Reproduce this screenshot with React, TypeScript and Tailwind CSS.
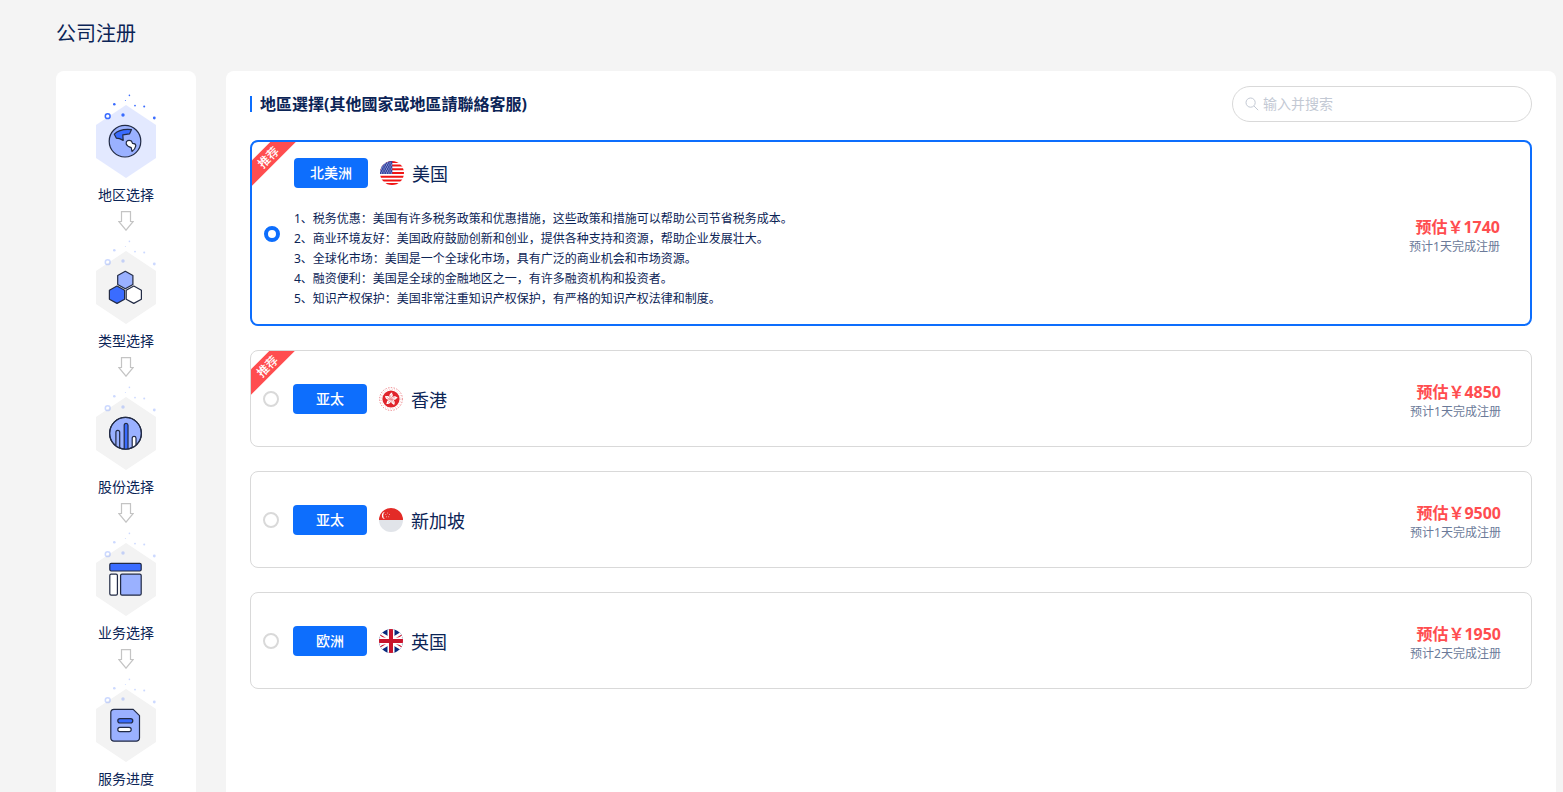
import { useState } from "react";
import type { ReactNode } from "react";
import clsx from "clsx";

const INK = "#222b45";

function GlobeIcon() {
  return (
    <g stroke={INK} strokeWidth="1.2" strokeLinejoin="round">
      <circle cx="29" cy="50.2" r="15.8" fill="#9ab1ff" />
      <path
        d="M18.3 43.2Q24 37.4 35.5 38.6L33.6 42.8 26.8 43.8 27.2 49.4 23.6 47.6 20.4 47.2Z"
        fill="#3a6cff"
      />
      <path
        d="M30.4 50.6Q32.6 48.6 35.4 50L36.6 52.4Q39.8 52.6 39.8 54.8 39.2 58.2 36 60.4L35.2 56.6Q31.2 55.4 30.2 53Z"
        fill="#fff"
      />
    </g>
  );
}

function TypeIcon() {
  const hex = "M0 -8.7L7.6 -4.5V4.5L0 8.7L-7.6 4.5V-4.5Z";
  return (
    <g stroke={INK} strokeWidth="1.2" strokeLinejoin="round">
      <path d={hex} transform="translate(29.3 43)" fill="#9ab1ff" />
      <path d={hex} transform="translate(21 57.7)" fill="#3a6cff" />
      <path d={hex} transform="translate(37.8 57.7)" fill="#fff" />
    </g>
  );
}

function ShareIcon() {
  return (
    <g stroke={INK} strokeWidth="1.2">
      <circle cx="29.5" cy="50.3" r="15.9" fill="#9ab1ff" />
      <path d="M19.9 62.8V49.2a1.9 1.9 0 0 1 3.8 0V65" fill="#9ab1ff" />
      <path d="M28.2 66V42.2a1.9 1.9 0 0 1 3.8 0V66" fill="#3a6cff" />
      <path d="M36.2 64.6V55.2a1.9 1.9 0 0 1 3.8 0V62" fill="#fff" />
      <circle cx="29.5" cy="50.3" r="15.9" fill="none" />
    </g>
  );
}

function BusinessIcon() {
  return (
    <g stroke={INK} strokeWidth="1.2">
      <rect x="13.8" y="34.4" width="31.4" height="7.6" rx="1.4" fill="#3a6cff" />
      <rect x="13.8" y="45.2" width="7.6" height="21" rx="1.4" fill="#fff" />
      <rect x="24.6" y="45.2" width="20.6" height="21" rx="1.4" fill="#9ab1ff" />
    </g>
  );
}

function ProgressIcon() {
  return (
    <g stroke={INK} strokeWidth="1.2" strokeLinejoin="round">
      <path
        d="M18 34.3H37.2L43.5 40.6V63a3.2 3.2 0 0 1-3.2 3.2H18A3.2 3.2 0 0 1 14.8 63V37.5A3.2 3.2 0 0 1 18 34.3Z"
        fill="#9ab1ff"
      />
      <rect x="21.8" y="43.6" width="15" height="4.4" rx="2.2" fill="#3a6cff" />
      <rect x="21.8" y="52.4" width="13.4" height="4.2" rx="2.1" fill="#fff" />
    </g>
  );
}

function StepIcon({ active, children }: { active: boolean; children: ReactNode }) {
  return (
    <svg width="60" height="90" viewBox="0 0 60 90" aria-hidden="true">
      <path d="M30 14L60 34V67L30 87L0 67V34Z" fill={active ? "#e3e9ff" : "#f3f3f3"} />
      <g fill="#3a6cff" opacity={active ? 1 : 0.25}>
        <circle cx="11.7" cy="25.2" r="2.4" fill="none" stroke="#3a6cff" strokeWidth="1.5" />
        <circle cx="27" cy="24" r="1.7" />
        <circle cx="18.3" cy="13.3" r="1.3" />
        <circle cx="33.4" cy="4.4" r="0.8" />
        <circle cx="29.4" cy="9.6" r="0.5" />
        <circle cx="39" cy="14.6" r="0.9" />
        <circle cx="48.2" cy="15.6" r="1" />
        <circle cx="58.3" cy="27" r="1.4" />
      </g>
      {children}
    </svg>
  );
}

function DownArrow() {
  return (
    <svg
      width="16"
      height="20"
      viewBox="0 0 16 20"
      fill="none"
      stroke="#c4c4c4"
      strokeWidth="1.2"
      aria-hidden="true"
    >
      <path d="M3.5 .6H12.5V10.5H15.2L8 19.2 .8 10.5H3.5Z" />
    </svg>
  );
}

function UsFlag() {
  return (
    <svg width="24" height="24" viewBox="0 0 24 24" aria-hidden="true">
      <clipPath id="us">
        <circle cx="12" cy="12" r="12" />
      </clipPath>
      <g clipPath="url(#us)">
        <path fill="#fff" d="M0 0h24v24H0z" />
        <path
          stroke="#f01414"
          strokeWidth="2"
          d="M0 .92h24M0 4.62h24M0 8.3h24M0 12h24M0 15.7h24M0 19.4h24M0 23.1h24"
        />
        <path fill="#3646a4" d="M0 0h12.3v12.9H0z" />
        <g stroke="#fff" strokeWidth=".8" strokeDasharray=".9 1.5">
          <path d="M0 2h12M0 6h12M0 10h12" />
          <path d="M1.2 4h11M1.2 8h11M1.2 12h11" />
        </g>
      </g>
    </svg>
  );
}

function HkFlag() {
  const petals = [0, 72, 144, 216, 288];
  return (
    <svg width="24" height="24" viewBox="0 0 24 24" fill="none" aria-hidden="true">
      <circle cx="12" cy="12" r="11.4" stroke="#e0242c" strokeWidth="0.9" strokeDasharray="1.4 1.4" opacity=".6" />
      <circle cx="12" cy="12" r="9.8" stroke="#e0242c" strokeWidth="0.7" strokeDasharray=".8 1.8" opacity=".5" />
      <circle cx="12" cy="12" r="8.6" fill="#e0242c" />
      {petals.map((a) => (
        <g key={a} transform={`rotate(${a} 12 12)`}>
          <path d="M12 11.8C9.6 10 9.8 6.8 13.2 5.2 12.6 6.6 14.2 7.2 13.8 8.8 13.4 10 12.4 10.4 12 11.8Z" fill="#fff" />
          <path d="M12 11C11.4 9.6 11.6 8.6 12.4 7.6" stroke="#e0242c" strokeWidth="0.4" />
        </g>
      ))}
    </svg>
  );
}

function SgFlag() {
  return (
    <svg width="24" height="24" viewBox="0 0 24 24" aria-hidden="true">
      <path d="M0 12a12 12 0 0 0 24 0Z" fill="#e1e4e9" />
      <path d="M0 12a12 12 0 0 1 24 0Z" fill="#e32b27" />
      <path d="M6 3.8A3.7 3.7 0 0 0 6 11.1 4.6 4.6 0 0 1 6 3.8Z" fill="#fff" />
      <g fill="#fff" opacity=".7">
        <circle cx="8.6" cy="5" r=".5" />
        <circle cx="6.8" cy="6.6" r=".5" />
        <circle cx="10.4" cy="6.6" r=".5" />
        <circle cx="7.5" cy="8.8" r=".5" />
        <circle cx="9.7" cy="8.8" r=".5" />
      </g>
    </svg>
  );
}

function UkFlag() {
  return (
    <svg width="24" height="24" viewBox="0 0 24 24" aria-hidden="true">
      <clipPath id="uk">
        <circle cx="12" cy="12" r="12" />
      </clipPath>
      <g clipPath="url(#uk)">
        <path fill="#0a2a7c" d="M0 0h24v24H0z" />
        <path stroke="#fff" strokeWidth="5.4" d="M-3 3L27 21M27 3L-3 21" />
        <path stroke="#c8142c" strokeWidth="1.2" d="M-3 3.6L12 12.6M27 20.4L12 11.4M27 3.6L12 12.6M-3 20.4L12 11.4" />
        <path stroke="#fff" strokeWidth="7" d="M12 0v24M0 12h24" />
        <path stroke="#c8142c" strokeWidth="4" d="M12 0v24M0 12h24" />
      </g>
    </svg>
  );
}

const steps = [
  { label: "地区选择", icon: <GlobeIcon /> },
  { label: "类型选择", icon: <TypeIcon /> },
  { label: "股份选择", icon: <ShareIcon /> },
  { label: "业务选择", icon: <BusinessIcon /> },
  { label: "服务进度", icon: <ProgressIcon /> },
];

type Region = {
  id: string;
  area: string;
  name: string;
  flag: ReactNode;
  price: number;
  days: number;
  recommended?: boolean;
  features?: string[];
};

const regions: Region[] = [
  {
    id: "us",
    area: "北美洲",
    name: "美国",
    flag: <UsFlag />,
    price: 1740,
    days: 1,
    recommended: true,
    features: [
      "1、税务优惠：美国有许多税务政策和优惠措施，这些政策和措施可以帮助公司节省税务成本。",
      "2、商业环境友好：美国政府鼓励创新和创业，提供各种支持和资源，帮助企业发展壮大。",
      "3、全球化市场：美国是一个全球化市场，具有广泛的商业机会和市场资源。",
      "4、融资便利：美国是全球的金融地区之一，有许多融资机构和投资者。",
      "5、知识产权保护：美国非常注重知识产权保护，有严格的知识产权法律和制度。",
    ],
  },
  { id: "hk", area: "亚太", name: "香港", flag: <HkFlag />, price: 4850, days: 1, recommended: true },
  { id: "sg", area: "亚太", name: "新加坡", flag: <SgFlag />, price: 9500, days: 1 },
  { id: "uk", area: "欧洲", name: "英国", flag: <UkFlag />, price: 1950, days: 2 },
];

function RegionCard({
  region,
  selected,
  onSelect,
}: {
  region: Region;
  selected: boolean;
  onSelect: () => void;
}) {
  return (
    <label
      className={clsx(
        "relative flex min-h-[97px] cursor-pointer items-center overflow-hidden rounded-lg pt-4 pr-[30px] pb-[15px] pl-3",
        selected ? "border-2 border-[#0d6efd]" : "border border-[#d9d9d9]"
      )}
    >
      {region.recommended && (
        <span className="absolute top-1.5 -left-4 h-[18px] w-16 -rotate-45 bg-[#ff4d4f] text-center text-xs leading-5 font-medium text-white">
          推荐
        </span>
      )}
      <input
        type="radio"
        name="region"
        checked={selected}
        onChange={onSelect}
        aria-label={region.name}
        className="mr-3.5 size-4 shrink-0 appearance-none rounded-full border-2 border-[#d9d9d9] bg-white checked:border-4 checked:border-[#0d6efd]"
      />
      <div className="flex flex-1 flex-col gap-[21px]">
        <div className="flex items-center">
          <span className="h-[30px] w-[74px] rounded bg-[#0d6efd] text-center text-sm leading-[30px] font-medium text-white">
            {region.area}
          </span>
          <span className="mr-2 ml-3">{region.flag}</span>
          <span className="pt-0.5 text-lg leading-7">{region.name}</span>
        </div>
        {selected && region.features && (
          <ul className="text-xs leading-5">
            {region.features.map((f) => (
              <li key={f}>{f}</li>
            ))}
          </ul>
        )}
      </div>
      <div className="text-right">
        <p className="text-base leading-[26px] font-bold text-[#ff4d4f]">预估￥{region.price}</p>
        <p className="text-xs leading-[14px] text-[#6b7a99]">预计{region.days}天完成注册</p>
      </div>
    </label>
  );
}

export default function App() {
  const [selected, setSelected] = useState("us");
  const [keyword, setKeyword] = useState("");

  const visible = regions.filter((r) => r.name.includes(keyword.trim()));

  return (
    <div className="flex min-h-screen flex-col bg-[#f4f4f4] pr-[7px] pl-14 font-['Noto_Sans','Noto_Sans_CJK_SC',sans-serif] text-[#0b2456]">
      <header className="pt-[18px] pb-[21px]">
        <h1 className="text-xl leading-8">公司注册</h1>
      </header>

      <div className="flex flex-1 gap-[30px]">
        <aside className="w-[140px] shrink-0 rounded-t-lg bg-white pt-5">
          <ol className="flex flex-col gap-1.5">
            {steps.map((step, i) => (
              <li key={step.label} className="flex flex-col items-center">
                <StepIcon active={i === 0}>{step.icon}</StepIcon>
                <span className="mt-1 mb-1.5 text-sm leading-5">{step.label}</span>
                {i < steps.length - 1 && <DownArrow />}
              </li>
            ))}
          </ol>
        </aside>

        <main className="flex-1 rounded-t-lg bg-white px-6 pt-[15px]">
          <div className="mb-[18px] flex items-center justify-between">
            <h2 className="border-l-2 border-[#0d6efd] pl-2 text-base leading-4 font-bold">
              地區選擇(其他國家或地區請聯絡客服)
            </h2>
            <div className="flex h-9 w-[300px] items-center gap-1 rounded-full border border-[#d9d9d9] px-3">
              <svg width="14" height="14" viewBox="0 0 14 14" fill="none" stroke="#c3c9d4" aria-hidden="true">
                <circle cx="5.6" cy="5.6" r="4.6" />
                <path d="M9 9L13.2 13.2" />
              </svg>
              <input
                type="text"
                value={keyword}
                onChange={(e) => setKeyword(e.target.value)}
                placeholder="输入并搜索"
                aria-label="输入并搜索"
                className="min-w-0 flex-1 text-sm outline-none placeholder:text-[#c3c9d4]"
              />
            </div>
          </div>

          <div className="flex flex-col gap-6">
            {visible.map((region) => (
              <RegionCard
                key={region.id}
                region={region}
                selected={selected === region.id}
                onSelect={() => setSelected(region.id)}
              />
            ))}
          </div>
        </main>
      </div>
    </div>
  );
}
